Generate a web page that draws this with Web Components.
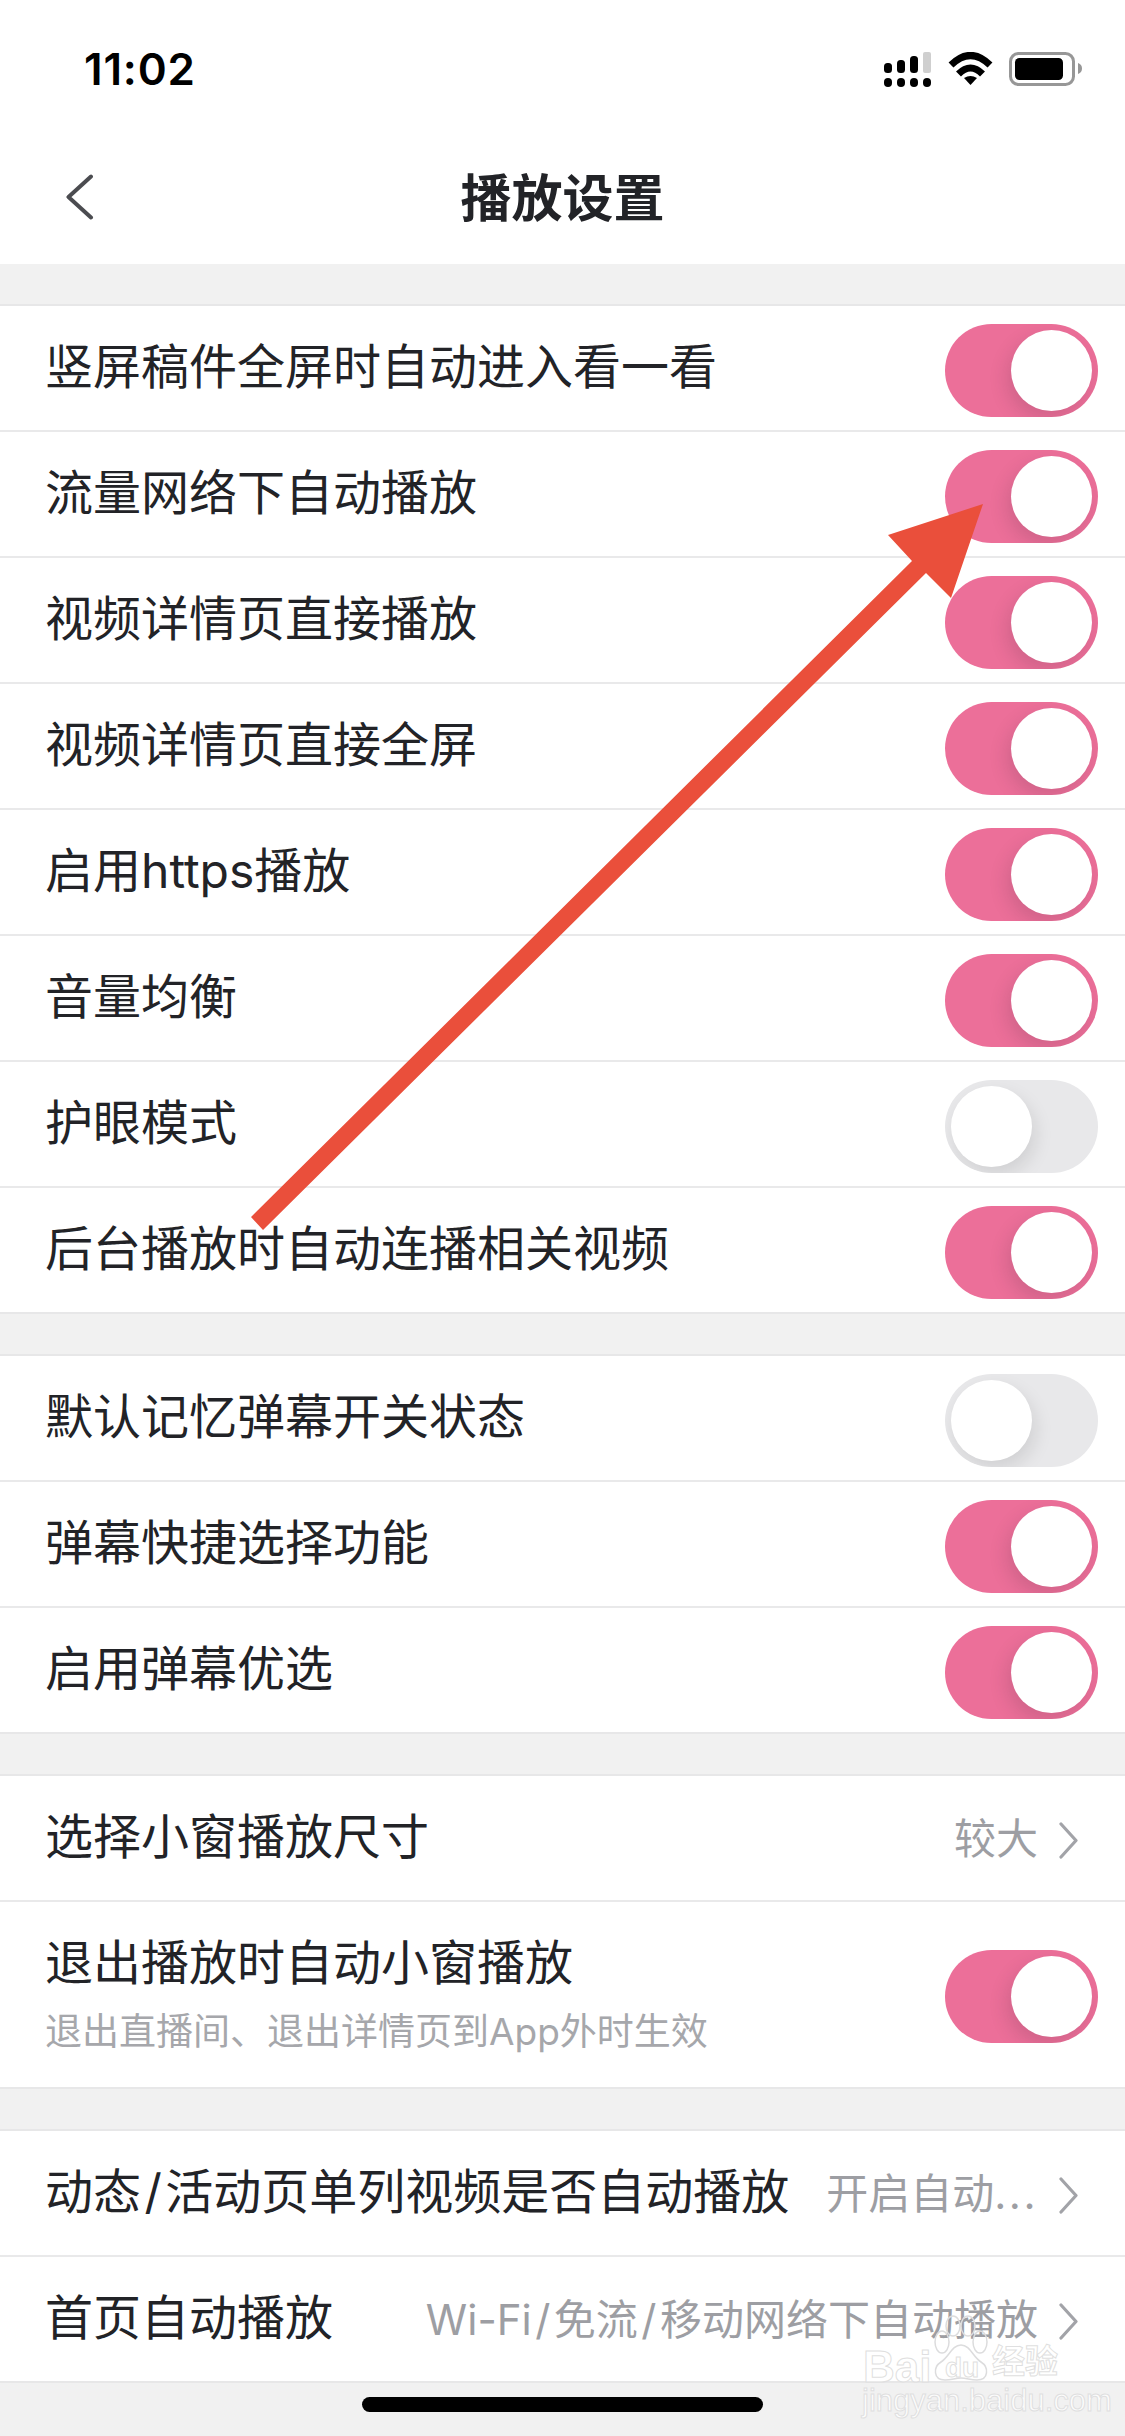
<!DOCTYPE html>
<html lang="zh">
<head>
<meta charset="utf-8">
<title>播放设置</title>
<style>
  html, body { margin: 0; padding: 0; }
  body {
    width: 1125px;
    height: 2436px;
    overflow: hidden;
    position: relative;
    background: #f1f1f1;
    color: #222327;
    font-family: "Inter", "Noto Sans CJK SC", sans-serif;
  }
</style>
</head>
<body>
  <status-bar time="11:02"></status-bar>
  <nav-bar>播放设置</nav-bar>

  <setting-group>
    <setting-row label="竖屏稿件全屏时自动进入看一看" toggle="on"></setting-row>
    <setting-row label="流量网络下自动播放" toggle="on"></setting-row>
    <setting-row label="视频详情页直接播放" toggle="on"></setting-row>
    <setting-row label="视频详情页直接全屏" toggle="on"></setting-row>
    <setting-row label="启用https播放" toggle="on"></setting-row>
    <setting-row label="音量均衡" toggle="on"></setting-row>
    <setting-row label="护眼模式" toggle="off"></setting-row>
    <setting-row label="后台播放时自动连播相关视频" toggle="on"></setting-row>
  </setting-group>

  <setting-group>
    <setting-row label="默认记忆弹幕开关状态" toggle="off"></setting-row>
    <setting-row label="弹幕快捷选择功能" toggle="on"></setting-row>
    <setting-row label="启用弹幕优选" toggle="on"></setting-row>
  </setting-group>

  <setting-group>
    <setting-row label="选择小窗播放尺寸" value="较大"></setting-row>
    <setting-row label="退出播放时自动小窗播放" sub="退出直播间、退出详情页到App外时生效" toggle="on"></setting-row>
  </setting-group>

  <setting-group>
    <setting-row label="动态/活动页单列视频是否自动播放" value="开启自动..."></setting-row>
    <setting-row label="首页自动播放" value="Wi-Fi/免流/移动网络下自动播放"></setting-row>
  </setting-group>

  <home-indicator></home-indicator>
  <baidu-mark></baidu-mark>
  <arrow-mark></arrow-mark>

<script>
class StatusBar extends HTMLElement {
    connectedCallback() {
        this.attachShadow({ mode: 'open' }).innerHTML = `
        <style>
        :host { display: block; height: 132px; background: #fff; box-sizing: border-box; padding: 52px 43px 0 84px; }
        .bar { display: flex; justify-content: space-between; align-items: flex-start; }
        .time { font: 600 44px/34px "Inter", sans-serif; color: #000; letter-spacing: .8px; }
        svg { display: block; }
        </style>
        <div class="bar">
            <div class="time">${this.getAttribute('time')}</div>
            <svg width="198" height="36" viewBox="884 52 198 36">
                <g fill="#000">
                    <rect x="884" y="63" width="8" height="10" rx="3.5"/>
                    <rect x="897" y="60" width="8" height="13" rx="3.5"/>
                    <rect x="910" y="56" width="8" height="17" rx="3.5"/>
                    <rect x="884" y="78" width="8" height="9" rx="4"/>
                    <rect x="897" y="78" width="8" height="9" rx="4"/>
                    <rect x="910" y="78" width="8" height="9" rx="4"/>
                    <rect x="923" y="78" width="8" height="9" rx="4"/>
                </g>
                <rect x="923" y="52" width="8" height="21" rx="2" fill="#cfcfcf"/>
                <g transform="translate(948 52)">
                    <path d="M3 13Q22.500 -6 42 13" fill="none" stroke="#000" stroke-width="7"/>
                    <path d="M10.500 22Q22.500 10 34.500 22" fill="none" stroke="#000" stroke-width="7"/>
                    <path d="M16 26Q22.500 22 29 26L22.500 33Z" fill="#000"/>
                </g>
                <rect x="1010.500" y="53.500" width="63" height="31" rx="8" fill="none" stroke="#979797" stroke-width="3"/>
                <rect x="1015" y="58" width="48" height="22" rx="4.500" fill="#000"/>
                <path d="M1078 63C1081 64 1082 66 1082 68.500C1082 71 1081 73 1078 74Z" fill="#979797"/>
            </svg>
        </div>
        `;
    }
}

class NavBar extends HTMLElement {
    connectedCallback() {
        this.attachShadow({ mode: 'open' }).innerHTML = `
        <style>
        :host { display: block; background: #fff; }
        .nav { height: 132px; display: flex; align-items: center; justify-content: center; position: relative; }
        .title { font: 700 51px/60px "Noto Sans CJK SC", sans-serif; color: #222327; margin-top: -6px; }
        svg { position: absolute; left: 66px; top: 42px; }
        </style>
        <div class="nav">
            <svg width="28" height="46" viewBox="0 0 28 46">
                <path d="M25 2.500L2.500 23L25 43.500" fill="none" stroke="#4b4c50" stroke-width="4" stroke-linecap="round" stroke-linejoin="round"/>
            </svg>
            <div class="title"><slot></slot></div>
        </div>
        `;
    }
}

class SettingGroup extends HTMLElement {
    connectedCallback() {
        this.attachShadow({ mode: 'open' }).innerHTML = `
        <style>
        :host { display: block; margin-top: 40px; background: #fff; border-top: 2px solid #e7e7e8; }
        </style>
        <slot></slot>
        `;
    }
}

class ToggleSwitch extends HTMLElement {
    connectedCallback() {
        this.attachShadow({ mode: 'open' }).innerHTML = `
        <style>
        :host { display: block; flex: none; }
        .track {
            width: 153px;
            height: 93px;
            box-sizing: border-box;
            padding: 6px;
            border-radius: 47px;
            overflow: hidden;
            display: flex;
            background: #ec6f99;
        }
        .knob {
            width: 81px;
            height: 81px;
            border-radius: 50%;
            background: #fff;
            box-shadow: -4px 8px 18px rgba(70, 40, 60, .17);
            margin-left: auto;
        }
        :host([off]) .track { background: #e8e8ea; }
        :host([off]) .knob { margin-left: 0; box-shadow: 4px 8px 18px rgba(0, 0, 0, .1); }
        </style>
        <div class="track"><div class="knob"></div></div>
        `;
    }
}

// slashes and dots sit wider in the original than in the fallback latin font
function spaced(text) {
    return text
        .replace(/\//g, '<span class="sl">/</span>')
        .replace('...', '<span class="dots">...</span>');
}

class SettingRow extends HTMLElement {
    connectedCallback() {
        const label = this.getAttribute('label');
        const sub = this.getAttribute('sub');
        const value = this.getAttribute('value');
        const toggle = this.getAttribute('toggle');
        let right = '';
        if (toggle) {
            right = `<toggle-switch ${toggle === 'off' ? 'off' : ''}></toggle-switch>`;
        } else {
            right = `
            <div class="value">${spaced(value)}</div>
            <svg class="chev" width="19" height="37" viewBox="0 0 19 37">
                <path d="M2 2L17 18.500L2 35" fill="none" stroke="#a2a3a8" stroke-width="3.200" stroke-linecap="round" stroke-linejoin="round"/>
            </svg>`;
        }
        this.attachShadow({ mode: 'open' }).innerHTML = `
        <style>
        :host {
            display: flex;
            align-items: center;
            justify-content: space-between;
            height: 126px;
            box-sizing: border-box;
            padding: 4px 27px 0 45px;
            border-bottom: 2px solid #e9e9ea;
            font-family: "Inter", "Noto Sans CJK SC", sans-serif;
        }
        :host(:last-child) { border-bottom-color: #e7e7e8; }
        :host([sub]) { height: 187px; }
        .label { font-size: 48px; line-height: 58px; color: #222327; white-space: nowrap; margin-top: -6px; }
        .sub { font-size: 37px; line-height: 44px; color: #a6a7ab; white-space: nowrap; margin-top: 18px; }
        .right { display: flex; align-items: center; }
        .right.nav { margin-right: 20px; gap: 21px; }
        .value { font-size: 42px; line-height: 50px; color: #9d9ea3; white-space: nowrap; margin-top: -2px; }
        .sl { padding: 0 3.5px; }
        .dots { letter-spacing: 2.5px; }
        svg { display: block; }
        </style>
        <div class="text">
            <div class="label">${spaced(label)}</div>
            ${sub ? `<div class="sub">${sub}</div>` : ''}
        </div>
        <div class="right ${toggle ? '' : 'nav'}">${right}</div>
        `;
    }
}

class HomeIndicator extends HTMLElement {
    connectedCallback() {
        this.attachShadow({ mode: 'open' }).innerHTML = `
        <style>
        :host { display: block; width: 401px; height: 15px; margin: 14px auto 0; background: #000; border-radius: 8px; }
        </style>
        `;
    }
}

class BaiduMark extends HTMLElement {
    connectedCallback() {
        this.attachShadow({ mode: 'open' }).innerHTML = `
        <style>
        :host { position: absolute; left: 860px; top: 2315px; width: 210px; height: 100px; pointer-events: none; }
        span {
            position: absolute;
            color: rgba(255, 255, 255, .85);
            -webkit-text-stroke: 1px #dfdfe0;
            white-space: nowrap;
            font-family: "Liberation Sans", "Noto Sans CJK SC", sans-serif;
            font-weight: 700;
        }
        .bai { left: 3px; top: 30px; font-size: 44px; line-height: 44px; }
        .du { left: 85px; top: 40px; font-size: 28px; line-height: 26px; }
        .jy { left: 132px; top: 28px; font-size: 33px; line-height: 38px; }
        .url { left: 2px; top: 70px; font-size: 31px; line-height: 32px; font-weight: 400; }
        svg { position: absolute; left: 70px; top: 0; }
        </style>
        <svg width="62" height="68" viewBox="0 0 62 68" fill="none" stroke="#dcdcdd" stroke-width="1.500">
            <ellipse cx="12" cy="27" rx="7" ry="11"/>
            <ellipse cx="23" cy="11" rx="7" ry="10"/>
            <ellipse cx="38" cy="11" rx="7" ry="10"/>
            <ellipse cx="50" cy="27" rx="7" ry="11"/>
            <path d="M31 30C22 30 19 42 11 47C3 52 3 65 15 65C22 65 25 63 31 63C37 63 40 65 47 65C59 65 59 52 51 47C43 42 40 30 31 30Z" fill="rgba(255,255,255,.6)"/>
        </svg>
        <span class="bai">Bai</span>
        <span class="du">du</span>
        <span class="jy">经验</span>
        <span class="url">jingyan.baidu.com</span>
        `;
    }
}

class ArrowMark extends HTMLElement {
    connectedCallback() {
        this.attachShadow({ mode: 'open' }).innerHTML = `
        <style>
        :host { position: absolute; left: 0; top: 0; width: 1125px; height: 2436px; pointer-events: none; }
        svg { display: block; }
        </style>
        <svg width="1125" height="2436" viewBox="0 0 1125 2436">
            <polygon points="983,504 888,535 912,561 251,1217 263,1230 926,573 951,598" fill="#ea4f3b"/>
        </svg>
        `;
    }
}

customElements.define('status-bar', StatusBar);
customElements.define('nav-bar', NavBar);
customElements.define('setting-group', SettingGroup);
customElements.define('toggle-switch', ToggleSwitch);
customElements.define('setting-row', SettingRow);
customElements.define('home-indicator', HomeIndicator);
customElements.define('baidu-mark', BaiduMark);
customElements.define('arrow-mark', ArrowMark);
</script>
</body>
</html>
